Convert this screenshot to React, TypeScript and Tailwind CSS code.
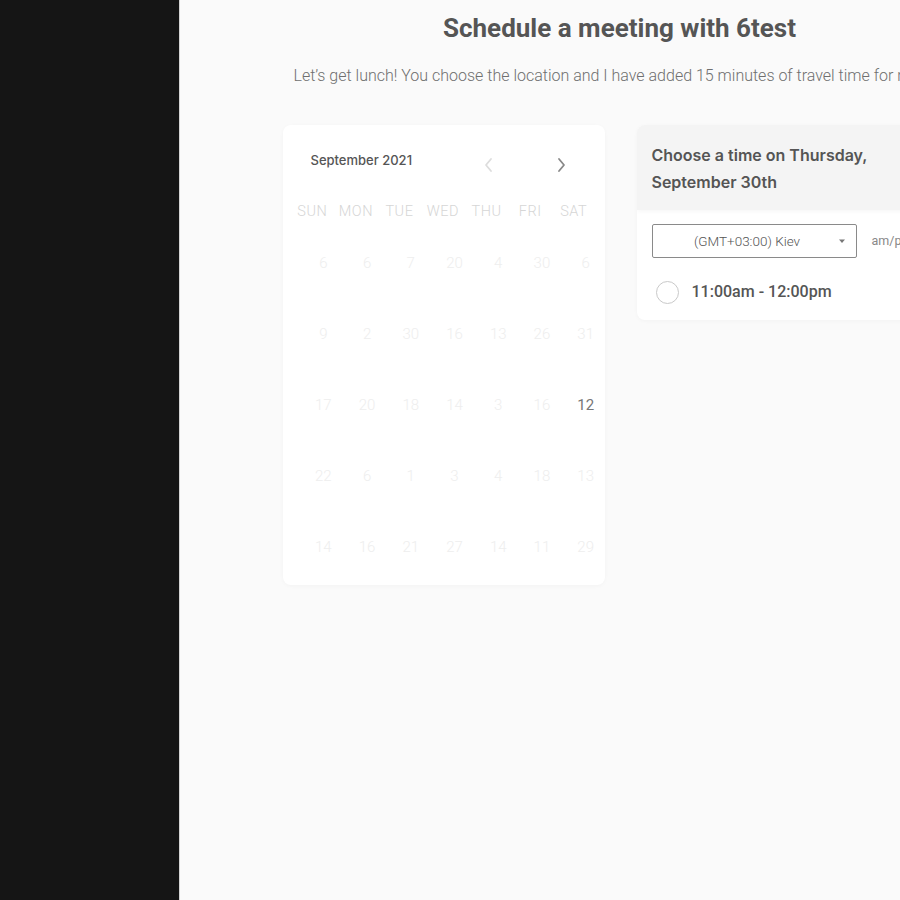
import React from 'react';

const days = ['SUN', 'MON', 'TUE', 'WED', 'THU', 'FRI', 'SAT'];

const weeks = [
  ['6', '6', '7', '20', '4', '30', '6'],
  ['9', '2', '30', '16', '13', '26', '31'],
  ['17', '20', '18', '14', '3', '16', '12'],
  ['22', '6', '1', '3', '4', '18', '13'],
  ['14', '16', '21', '27', '14', '11', '29'],
];

const Chevron = ({ dir, className }: { dir: 'left' | 'right'; className?: string }) => (
  <svg width="12" height="16" viewBox="0 0 12 16" className={className} fill="none" stroke="currentColor" strokeWidth="1.8" strokeLinecap="round" strokeLinejoin="round">
    {dir === 'left' ? <path d="M8 2 L3 8 L8 14" /> : <path d="M4 2 L9 8 L4 14" />}
  </svg>
);

export default function App() {
  return (
    <div className="w-[900px] h-[900px] flex overflow-hidden font-['Roboto',sans-serif]">
      {/* sidebar */}
      <div className="w-[179px] shrink-0 bg-[#151515]" />

      {/* main */}
      <div className="w-[880px] shrink-0 bg-[#fafafa] border-l border-[#d4d4d4] flex flex-col items-center">
        <h1 className="mt-[11px] text-[26px] leading-[34px] font-bold text-[#555]">
          Schedule a meeting with 6test
        </h1>

        <div className="w-[674px] mt-[21px]">
          <p className="pl-[11px] text-[16px] leading-[20px] font-light text-[#6f6f6f] whitespace-nowrap">
            Let’s get lunch! You choose the location and I have added 15 minutes of travel time for me
          </p>

          <div className="flex gap-[32px] mt-[39px]">
            {/* calendar */}
            <div className="w-[322px] h-[460px] bg-white rounded-lg shadow-[0_1px_4px_rgba(0,0,0,0.03)] pt-[24px]">
              <div className="flex items-center pl-[28px]">
                <span className="text-[13px] font-medium text-[#555] font-['Inter',sans-serif]">September 2021</span>
                <Chevron dir="left" className="ml-[71px] mt-[8px] text-[#ddd]" />
                <Chevron dir="right" className="ml-[60px] mt-[8px] text-[#888]" />
              </div>

              <div className="grid grid-cols-7 w-[305px] ml-[8px] mt-[28px]">
                {days.map((d) => (
                  <div key={d} className="text-center text-[14.5px] font-light text-[#d6d6d6] tracking-[0.5px]">
                    {d}
                  </div>
                ))}
              </div>

              <div className="flex flex-col mt-[29px] w-[306px] ml-[19px] gap-[49px]">
                {weeks.map((w, i) => (
                  <div key={i} className="grid grid-cols-7">
                    {w.map((n, j) => {
                      const active = i === 2 && j === 6;
                      return (
                        <div
                          key={j}
                          className={`text-center text-[15px] leading-[22px] ${active ? 'text-[#777] font-normal' : 'text-[#eeeeee] font-light'}`}
                        >
                          {n}
                        </div>
                      );
                    })}
                  </div>
                ))}
              </div>
            </div>

            {/* times */}
            <div className="w-[320px] h-[195px] bg-white rounded-lg shadow-[0_1px_4px_rgba(0,0,0,0.03)] overflow-hidden">
              <div className="h-[85px] bg-[#f4f4f4] px-[15px] pt-[17px] shadow-[0_2px_4px_rgba(0,0,0,0.03)]">
                <p className="text-[16px] leading-[27px] font-semibold text-[#555] font-['Inter',sans-serif]">
                  Choose a time on Thursday,
                  <br />
                  September 30th
                </p>
              </div>
              <div className="px-[15px] pt-[14px]">
                <div className="flex items-center">
                  <div className="w-[205px] h-[34px] border border-[#8a8a8a] rounded-[2px] flex items-center bg-white">
                    <span className="flex-1 text-center pl-[4px] text-[13.5px] font-light text-[#555]">(GMT+03:00) Kiev</span>
                    <svg width="8" height="5" viewBox="0 0 8 5" className="mr-[10px]">
                      <path d="M1 0.5 L7 0.5 L4 4 Z" fill="#777" />
                    </svg>
                  </div>
                  <span className="ml-[15px] text-[12.5px] text-[#888]">am/pm</span>
                </div>
                <div className="flex items-center mt-[22px] pl-[4px]">
                  <div className="w-[23px] h-[23px] rounded-full border-[1.5px] border-[#c9c9c9] bg-white" />
                  <span className="ml-[13px] text-[16px] font-medium text-[#555]">11:00am - 12:00pm</span>
                </div>
              </div>
            </div>
          </div>
        </div>
      </div>
    </div>
  );
}
